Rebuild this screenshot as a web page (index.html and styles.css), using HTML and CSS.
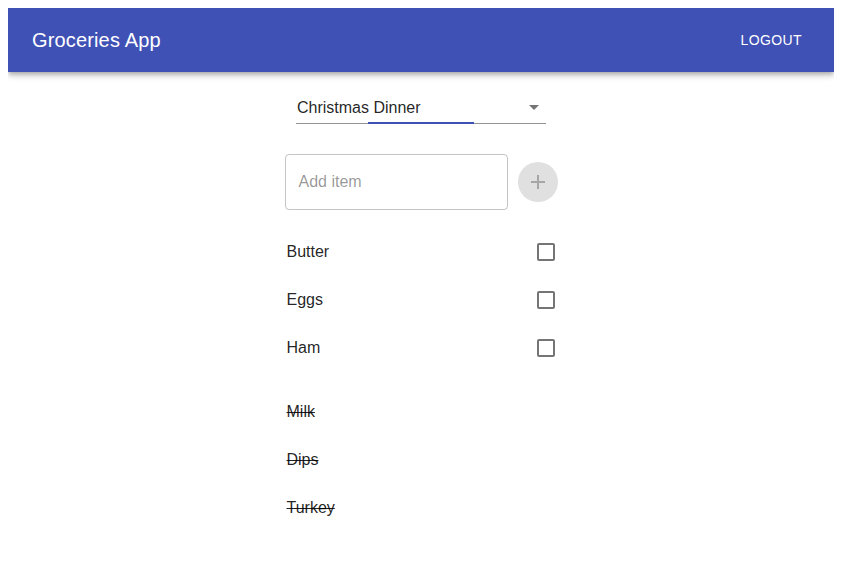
FILE: index.html
```html
<!DOCTYPE html>
<html>
<head>
<meta charset="utf-8">
<link rel="stylesheet" href="styles.css">
</head>
<body>
<header class="appbar">
  <h1 class="title">Groceries App</h1>
  <button class="logout">Logout</button>
</header>
<main class="main">
  <div class="select">
    <span class="select-value">Christmas Dinner</span>
    <svg class="select-arrow" viewBox="0 0 24 24" width="24" height="24"><path d="M7 10l5 5 5-5z"/></svg>
    <span class="underline"></span>
    <span class="underline-focus"></span>
  </div>
  <div class="add-row">
    <div class="field"><span class="placeholder">Add item</span></div>
    <button class="add-btn" aria-label="add">
      <svg viewBox="0 0 24 24" width="24" height="24"><path d="M19 13h-6v6h-2v-6H5v-2h6V5h2v6h6v2z"/></svg>
    </button>
  </div>
  <ul class="list">
    <li class="item"><span>Butter</span><svg class="check" viewBox="0 0 24 24" width="24" height="24"><path d="M19 5v14H5V5h14m0-2H5c-1.11 0-2 .9-2 2v14c0 1.1.89 2 2 2h14c1.1 0 2-.9 2-2V5c0-1.1-.9-2-2-2z"/></svg></li>
    <li class="item"><span>Eggs</span><svg class="check" viewBox="0 0 24 24" width="24" height="24"><path d="M19 5v14H5V5h14m0-2H5c-1.11 0-2 .9-2 2v14c0 1.1.89 2 2 2h14c1.1 0 2-.9 2-2V5c0-1.1-.9-2-2-2z"/></svg></li>
    <li class="item"><span>Ham</span><svg class="check" viewBox="0 0 24 24" width="24" height="24"><path d="M19 5v14H5V5h14m0-2H5c-1.11 0-2 .9-2 2v14c0 1.1.89 2 2 2h14c1.1 0 2-.9 2-2V5c0-1.1-.9-2-2-2z"/></svg></li>
  </ul>
  <ul class="list done">
    <li class="item"><span>Milk</span></li>
    <li class="item"><span>Dips</span></li>
    <li class="item"><span>Turkey</span></li>
  </ul>
</main>
</body>
</html>
```
FILE: styles.css
```css
body {
  margin: 8px;
  font-family: "Liberation Sans", Arial, sans-serif;
  color: rgba(0,0,0,0.87);
  background: #fff;
}
.appbar {
  height: 64px;
  background: #3f51b5;
  color: #fff;
  display: flex;
  align-items: center;
  justify-content: space-between;
  padding: 0 24px;
  box-shadow: 0 2px 4px -1px rgba(0,0,0,0.2), 0 4px 5px 0 rgba(0,0,0,0.14), 0 1px 10px 0 rgba(0,0,0,0.12);
}
.title {
  margin: 0;
  font-size: 20px;
  font-weight: 400;
  letter-spacing: 0.0075em;
}
.logout {
  background: none;
  border: 0;
  color: #fff;
  font-family: inherit;
  font-size: 14px;
  font-weight: 400;
  letter-spacing: 0.02857em;
  text-transform: uppercase;
  padding: 6px 8px;
}
.main {
  display: flex;
  flex-direction: column;
  align-items: center;
}
.select {
  position: relative;
  width: 250px;
  height: 32px;
  margin-top: 19px;
  display: flex;
  align-items: center;
}
.select-value {
  font-size: 16px;
  padding: 1px 0 0 1px;
}
.select-arrow {
  position: absolute;
  right: 0;
  top: 4px;
  fill: rgba(0,0,0,0.54);
}
.underline {
  position: absolute;
  left: 0;
  right: 0;
  bottom: -1px;
  height: 1px;
  background: rgba(0,0,0,0.42);
}
.underline-focus {
  position: absolute;
  left: 72px;
  width: 106px;
  bottom: -1px;
  height: 2px;
  background: #3f51b5;
}
.add-row {
  display: flex;
  align-items: center;
  width: 273px;
  margin-top: 31px;
}
.field {
  height: 54px;
  border: 1px solid rgba(0,0,0,0.23);
  border-radius: 4px;
  display: flex;
  align-items: center;
  padding-left: 13px;
  box-sizing: content-box;
  width: 208px;
}
.placeholder {
  font-size: 16px;
  color: rgba(0,0,0,0.42);
}
.add-btn {
  width: 40px;
  height: 40px;
  border-radius: 50%;
  border: 0;
  margin-left: 10px;
  background: #e0e0e0;
  display: flex;
  align-items: center;
  justify-content: center;
  padding: 0;
}
.add-btn svg {
  fill: rgba(0,0,0,0.26);
}
.list {
  list-style: none;
  margin: 18px 0 0;
  padding: 0;
  width: 273px;
}
.list.done {
  margin-top: 16px;
}
.item {
  height: 48px;
  display: flex;
  align-items: center;
  justify-content: space-between;
  font-size: 16px;
  padding-left: 2px;
}
.check {
  fill: rgba(0,0,0,0.54);
}
.done .item span {
  text-decoration: line-through;
}
```
